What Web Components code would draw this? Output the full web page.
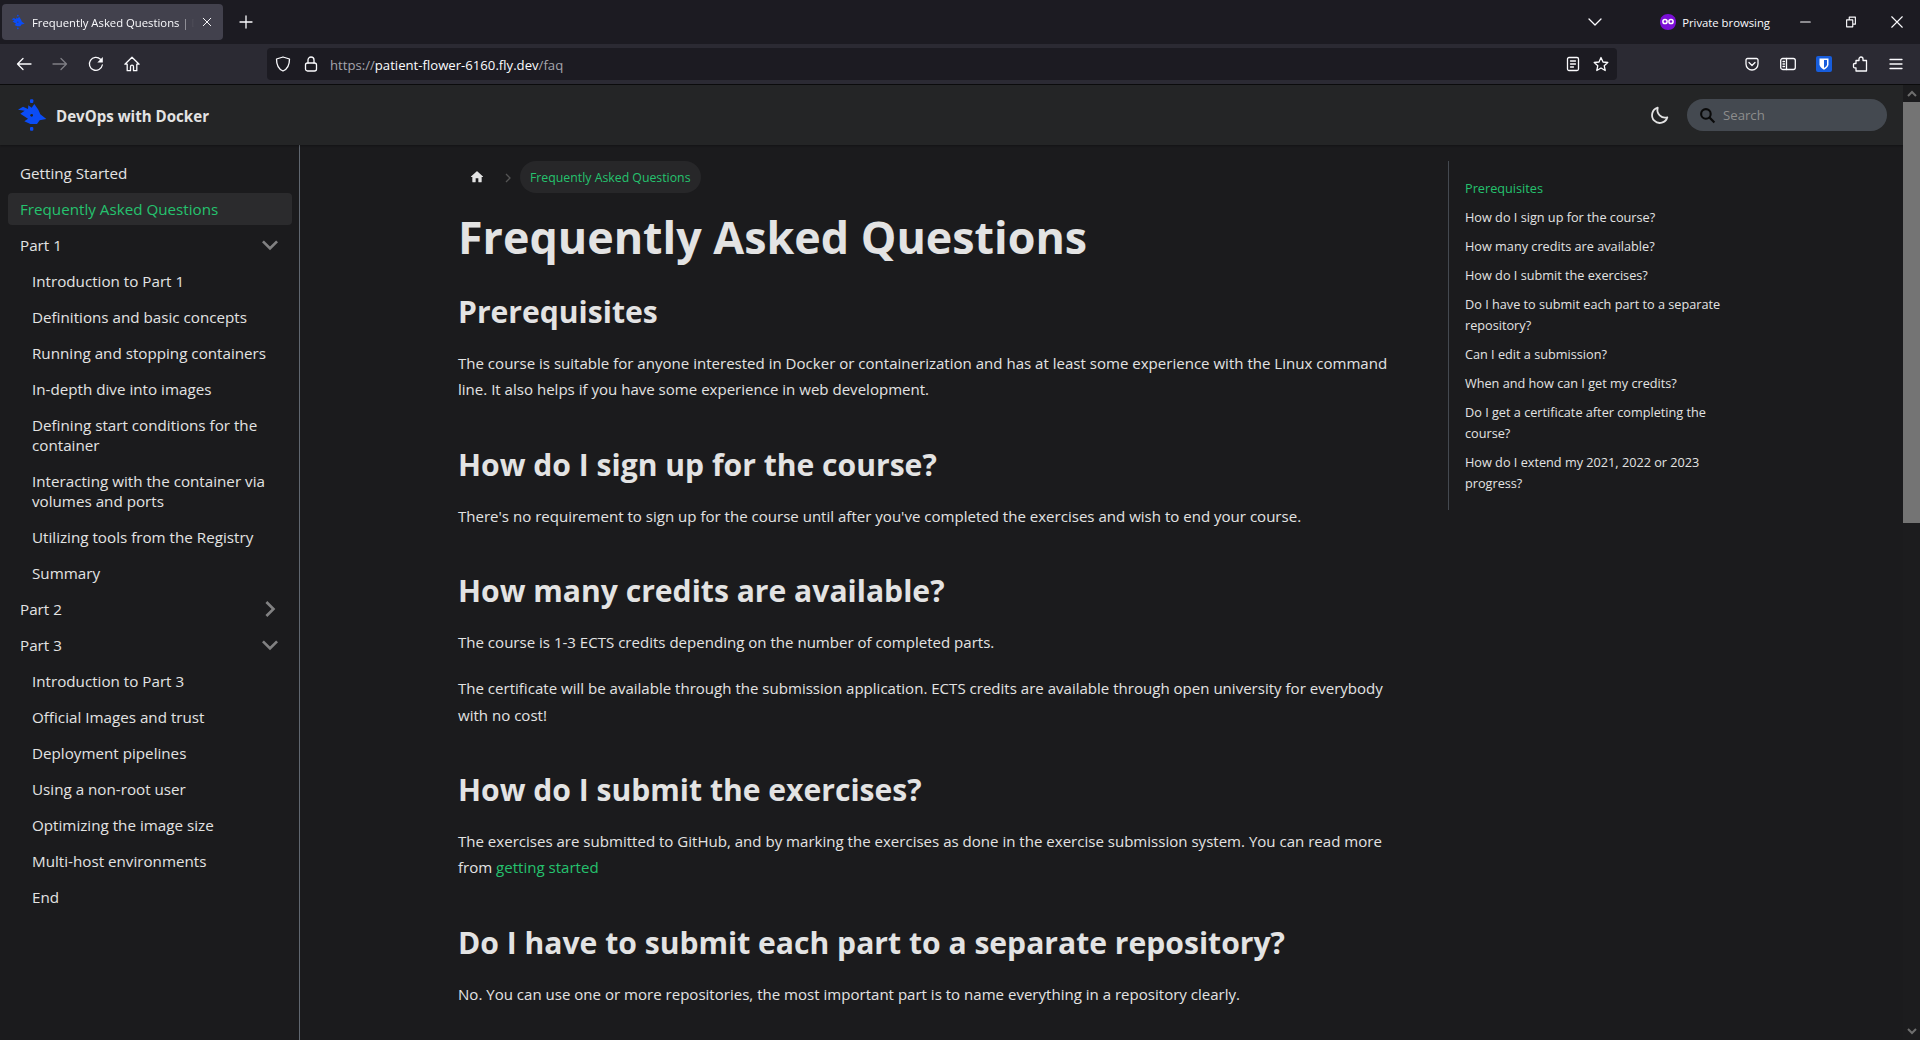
<!DOCTYPE html><html><head><meta charset="utf-8"><style>
html,body{margin:0;height:100%;overflow:hidden;background:#1b1b1d;color:#e3e3e3;font-family:"Open Sans",sans-serif}
</style></head><body>
<browser-chrome></browser-chrome>
<docs-nav></docs-nav>
<docs-layout></docs-layout>
<page-scrollbar></page-scrollbar>
<script>
const ic=(d,s=16,extra='')=>`<svg width="${s}" height="${s}" viewBox="0 0 16 16" fill="none" stroke="#fbfbfe" stroke-width="1.3" stroke-linecap="round" stroke-linejoin="round" ${extra}>${d}</svg>`;
const logoShape=(hole)=>`<path d="M55 197 75 200 62 209 85 224 74 232 92 240 112 240 120 229 140 225 122 211 116 197 104 180 96 191 86 184 85 195 70 188z" fill="#0b4cf5"/><rect x="91" y="166" width="10" height="11" rx="3" fill="#0b4cf5"/><rect x="91" y="249" width="10" height="11" rx="3" fill="#0b4cf5"/><circle cx="96" cy="214" r="4" fill="${hole}"/>`;
class BrowserChrome extends HTMLElement{constructor(){super();this.attachShadow({mode:'open'}).innerHTML=`<style>
:host{display:block;height:85px;background:#1c1b22;font:11.300px "Open Sans",sans-serif;color:#fbfbfe}
.tabs{height:44px;display:flex;align-items:center;padding-left:2px}
.tab{width:221px;height:36px;box-sizing:border-box;background:#42414d;border-radius:4px;display:flex;align-items:center;padding:0 10px 0 9px;gap:7px;white-space:nowrap;overflow:hidden}
.tab span{flex:1;overflow:hidden;-webkit-mask-image:linear-gradient(90deg,#000 90%,transparent 100%)}
.plus{margin-left:15px;display:flex}
.right{margin-left:auto;display:flex;align-items:center}
.bar{height:40px;display:flex;align-items:center;background:#2b2a33;padding:0 0 0 6px;border-bottom:1px solid #0c0c0d}
.btn{width:36px;display:flex;justify-content:center}
.url{margin-left:117px;width:1350px;height:32px;background:#1c1b22;border-radius:4px;display:flex;align-items:center;padding:0 8px;box-sizing:border-box;gap:12px;font-size:13.150px;color:#fbfbfe}
.url i{font-style:normal;color:#a5a5ad}
.tools{display:flex;margin-left:auto;margin-right:6px}
.tools>*{width:36px;display:flex;justify-content:center}
</style>
<div class="tabs"><div class="tab"><svg width="14" height="16" viewBox="52 165 90 96">${logoShape('#42414d')}</svg><span>Frequently Asked Questions | DevOps with Docker</span>${ic('<path d="m3 3 10 10M13 3 3 13"/>',12)}</div>
<div class="plus">${ic('<path d="M8 2v12M2 8h12"/>')}</div>
<div class="right">
<span style="display:flex;margin-right:57px">${ic('<path d="m2 5 6 6 6-6"/>')}</span>
<svg width="16" height="18" viewBox="0 0 16 18"><path d="M8 1c4.500 0 8 3 8 8s-3.500 8-8 8-8-3-8-8 3.500-8 8-8z" fill="#7b0fd6"/><circle cx="5" cy="8.500" r="2.100" fill="none" stroke="#fff" stroke-width="1.500"/><circle cx="11" cy="8.500" r="2.100" fill="none" stroke="#fff" stroke-width="1.500"/></svg>
<span style="margin:0 28px 0 6px">Private browsing</span>
<span style="display:flex;gap:32px;margin-right:16px">${ic('<path d="M3 8h11"/>',14)}${ic('<path d="M3 5.500h7v8H3zM6 5.500V2.500h7v8h-3"/>',14)}${ic('<path d="m2 2 12 12M14 2 2 14"/>',14)}</span>
</div></div>
<div class="bar"><span class="btn">${ic('<path d="M15 8H1.500M7 2.500 1.500 8 7 13.500"/>')}</span><span class="btn" style="opacity:.4">${ic('<path d="M1 8h13.500M9 2.500 14.500 8 9 13.500"/>')}</span><span class="btn">${ic('<path d="M14.300 9A6.500 6.500 0 1 1 12.500 3.300"/><path d="M14.800 1v5.500H9.300z" fill="#fbfbfe" stroke="none"/>')}</span><span class="btn">${ic('<path d="M8 1.200.900 8.200h2.300v6.500h3.300v-4a1.500 1.500 0 0 1 3 0v4h3.300V8.200h2.300z"/>')}</span>
<div class="url">${ic('<path d="M8 1 1.500 3c0 6 1.500 10 6.500 12 5-2 6.500-6 6.500-12z"/>')}${ic('<rect x="2.500" y="7" width="11" height="8" rx="2"/><path d="M5 7V4a3 3 0 0 1 6 0v3"/>')}<span style="margin-left:-1px;padding-top:1px"><i>https://</i>patient-flower-6160.fly.dev<i>/faq</i></span>
<span style="margin-left:auto;display:flex;gap:12px">${ic('<rect x="2.500" y="1.500" width="11" height="13" rx="1.500"/><path d="M5.500 5h5M5.500 8h5M5.500 11h3"/>')}${ic('<path d="m8 1.500 2 4.500 4.800.5-3.600 3.200 1 4.800L8 12l-4.200 2.500 1-4.800L1.200 6.500 6 6z"/>')}</span></div>
<span class="tools"><span>${ic('<path d="M3.500 2.500h9A1.500 1.500 0 0 1 14 4v4a6 6 0 0 1-12 0V4a1.500 1.500 0 0 1 1.500-1.500zM5 6.500l3 3 3-3"/>')}</span><span>${ic('<rect x=".700" y="2.500" width="14.600" height="11" rx="2"/><path d="M6.500 2.500v11M3 5.500h1.500M3 8h1.500M3 10.500h1.500"/>')}</span><span><svg width="16" height="16" viewBox="0 0 16 16"><rect width="16" height="16" rx="2" fill="#175ddc"/><path d="M3.500 2.500h9v6c0 2.200-2.500 4-4.500 5.200-2-1.200-4.500-3-4.500-5.200z" fill="#fff"/><path d="M8 4h3v4.500c0 1.300-1.700 2.600-3 3.400z" fill="#175ddc"/></svg></span><span>${ic('<path d="M7 4.500V3a2 2 0 0 1 4 0v1.500h3.500V15H4v-3.200H2.500a1 1 0 0 1-1-1V8.500a1 1 0 0 1 1-1H4v-3z"/>')}</span><span>${ic('<path d="M2 3.500h12M2 8h12M2 12.500h12"/>')}</span></span>
</div>`}}
customElements.define('browser-chrome',BrowserChrome);
class DocsNav extends HTMLElement{constructor(){super();this.attachShadow({mode:'open'}).innerHTML=`<style>
:host{display:flex;align-items:center;height:60px;box-sizing:border-box;background:#242526;padding:0 33px 0 17px;box-shadow:0 1px 2px rgba(0,0,0,.3);position:relative;font:700 15.100px "Open Sans",sans-serif;color:#e3e3e3}
b{margin-left:9px;font-weight:700;position:relative;top:1px}
.moon{margin-left:auto;margin-right:16px;display:flex}
.search{width:200px;height:32px;border-radius:32px;background:#444950;display:flex;align-items:center;padding-left:12px;box-sizing:border-box;gap:7px;font:400 13.200px "Open Sans",sans-serif;color:#8d8d8d}
</style>
<svg width="30" height="32" viewBox="52 165 90 96">${logoShape('#242526')}</svg>
<b>DevOps with Docker</b>
<span class="moon"><svg width="22" height="22" viewBox="0 0 24 24" fill="none" stroke="#e3e3e3" stroke-width="2" stroke-linecap="round" stroke-linejoin="round"><path d="M20 14.500A8.500 8.500 0 0 1 9.500 4a8.500 8.500 0 1 0 10.500 10.500z"/></svg></span>
<div class="search"><svg width="17" height="17" viewBox="0 0 16 16" fill="none" stroke="#0a0a0a" stroke-width="2"><circle cx="6.500" cy="6.500" r="4.500"/><path d="m10 10 4.500 4.500"/></svg>Search</div>`}}
customElements.define('docs-nav',DocsNav);
class SideItem extends HTMLElement{
constructor(){super();const a=this.getAttribute.bind(this);const arrow=a('arrow');this.attachShadow({mode:'open'}).innerHTML=`<style>
:host{display:block;margin-top:4px}
a{display:flex;align-items:center;justify-content:space-between;padding:6px 12px;border-radius:4px;line-height:20px;color:#e3e3e3}
:host([sub]) a{padding-left:24px}
:host([active]) a{color:#25c26e;background:#2b2b2d}
svg{flex:none;margin:-6px -6px -6px 0}
</style><a><span><slot></slot></span>${arrow?`<svg width="32" height="32" viewBox="0 0 24 24" style="transform:rotate(${arrow=='right'?90:180}deg)"><path fill="rgba(255,255,255,.45)" d="M7.410 15.410 12 10.830l4.590 4.580L18 14l-6-6-6 6z"/></svg>`:''}</a>`}}
customElements.define('side-item',SideItem);
class DocsSidebar extends HTMLElement{constructor(){super();this.attachShadow({mode:'open'}).innerHTML=`<style>
:host{display:block;width:300px;flex:none;box-sizing:border-box;border-right:1px solid #606770;padding:8px 7px 4px 8px;font-size:15.200px}
</style><slot></slot>`}}
customElements.define('docs-sidebar',DocsSidebar);
class FaqArticle extends HTMLElement{constructor(){super();this.attachShadow({mode:'open'}).innerHTML=`<style>
:host{display:block;width:934px;margin-left:158px;padding-top:16px;flex:none;font-size:15.050px;line-height:26.400px;color:#e3e3e3}
.crumbs{display:flex;align-items:center;height:32px;font-size:12.300px}
.crumbs .sep{margin:2px 9px 0 20px;display:flex}
.pill{background:#272729;color:#25c26e;border-radius:32px;padding:1px 10px 0;line-height:31px}
h1{font-size:44.800px;line-height:60px;margin:14px 0 0;font-weight:700;color:#e3e3e3}
h2{font-size:30.100px;line-height:40px;margin:0;font-weight:700}
h2.f{margin-top:25px;}
h2:not(.f){margin-top:42px}
p{margin:0 0 20px}
h2+p{margin-top:17.900px}
a{color:#25c26e}
</style>
<div class="crumbs"><svg width="16" height="16" viewBox="0 0 24 24" style="margin-left:11px"><path fill="#e3e3e3" d="M10 19v-5h4v5c0 .550.450 1 1 1h3c.550 0 1-.450 1-1v-7h1.700c.460 0 .680-.570.330-.870L12.670 3.600c-.380-.340-.960-.340-1.340 0l-8.360 7.530c-.340.300-.130.870.330.870H5v7c0 .550.450 1 1 1h3c.550 0 1-.450 1-1z"/></svg><span class="sep"><svg width="6" height="10" viewBox="0 0 6 10" fill="none" stroke="#555" stroke-width="1.300"><path d="m1 1 4 4-4 4"/></svg></span><span class="pill">Frequently Asked Questions</span></div>
<h1>Frequently Asked Questions</h1>
<h2 class="f">Prerequisites</h2>
<p>The course is suitable for anyone interested in Docker or containerization and has at least some experience with the Linux command line. It also helps if you have some experience in web development.</p>
<h2>How do I sign up for the course?</h2>
<p>There's no requirement to sign up for the course until after you've completed the exercises and wish to end your course.</p>
<h2>How many credits are available?</h2>
<p>The course is 1-3 ECTS credits depending on the number of completed parts.</p>
<p>The certificate will be available through the submission application. ECTS credits are available through open university for everybody with no cost!</p>
<h2>How do I submit the exercises?</h2>
<p>The exercises are submitted to GitHub, and by marking the exercises as done in the exercise submission system. You can read more from <a>getting started</a></p>
<h2>Do I have to submit each part to a separate repository?</h2>
<p>No. You can use one or more repositories, the most important part is to name everything in a repository clearly.</p>`}}
customElements.define('faq-article',FaqArticle);
class DocsToc extends HTMLElement{constructor(){super();this.attachShadow({mode:'open'}).innerHTML=`<style>
:host{display:block;width:300px;flex:none;margin:16px 0 0 56px;box-sizing:border-box;align-self:flex-start;border-left:1px solid #444950;padding:16.500px 16px;font-size:12.700px;line-height:20.800px;color:#e3e3e3}
div{margin-top:8.300px}div:first-of-type{margin-top:0;color:#25c26e}
</style>
<div>Prerequisites</div><div>How do I sign up for the course?</div><div>How many credits are available?</div><div>How do I submit the exercises?</div><div>Do I have to submit each part to a separate repository?</div><div>Can I edit a submission?</div><div>When and how can I get my credits?</div><div>Do I get a certificate after completing the course?</div><div>How do I extend my 2021, 2022 or 2023 progress?</div>`}}
customElements.define('docs-toc',DocsToc);
class DocsLayout extends HTMLElement{constructor(){super();this.attachShadow({mode:'open'}).innerHTML=`<style>
:host{display:flex;height:895px;overflow:hidden}
</style>
<docs-sidebar>
<side-item>Getting Started</side-item><side-item active>Frequently Asked Questions</side-item><side-item arrow="down">Part 1</side-item>
<side-item sub>Introduction to Part 1</side-item><side-item sub>Definitions and basic concepts</side-item><side-item sub>Running and stopping containers</side-item><side-item sub>In-depth dive into images</side-item><side-item sub>Defining start conditions for the container</side-item><side-item sub>Interacting with the container via volumes and ports</side-item><side-item sub>Utilizing tools from the Registry</side-item><side-item sub>Summary</side-item>
<side-item arrow="right">Part 2</side-item><side-item arrow="down">Part 3</side-item>
<side-item sub>Introduction to Part 3</side-item><side-item sub>Official Images and trust</side-item><side-item sub>Deployment pipelines</side-item><side-item sub>Using a non-root user</side-item><side-item sub>Optimizing the image size</side-item><side-item sub>Multi-host environments</side-item><side-item sub>End</side-item>
</docs-sidebar>
<faq-article></faq-article><docs-toc></docs-toc>`}}
customElements.define('docs-layout',DocsLayout);
class PageScrollbar extends HTMLElement{constructor(){super();this.attachShadow({mode:'open'}).innerHTML=`<style>
:host{position:absolute;right:0;top:85px;bottom:0;width:17px;background:#1c1c1e;display:flex;flex-direction:column}
.b{height:17px;display:flex;align-items:center;justify-content:center;flex:none}
.t{height:421px;background:#747474;flex:none}
.s{flex:1}
</style>
<div class="b"><svg width="10" height="7" viewBox="0 0 10 7" fill="none" stroke="#6e6e6e" stroke-width="2"><path d="m1 6 4-4 4 4"/></svg></div><div class="t"></div><div class="s"></div><div class="b"><svg width="10" height="7" viewBox="0 0 10 7" fill="none" stroke="#6e6e6e" stroke-width="2"><path d="m1 1 4 4 4-4"/></svg></div>`}}
customElements.define('page-scrollbar',PageScrollbar);
</script></body></html>
